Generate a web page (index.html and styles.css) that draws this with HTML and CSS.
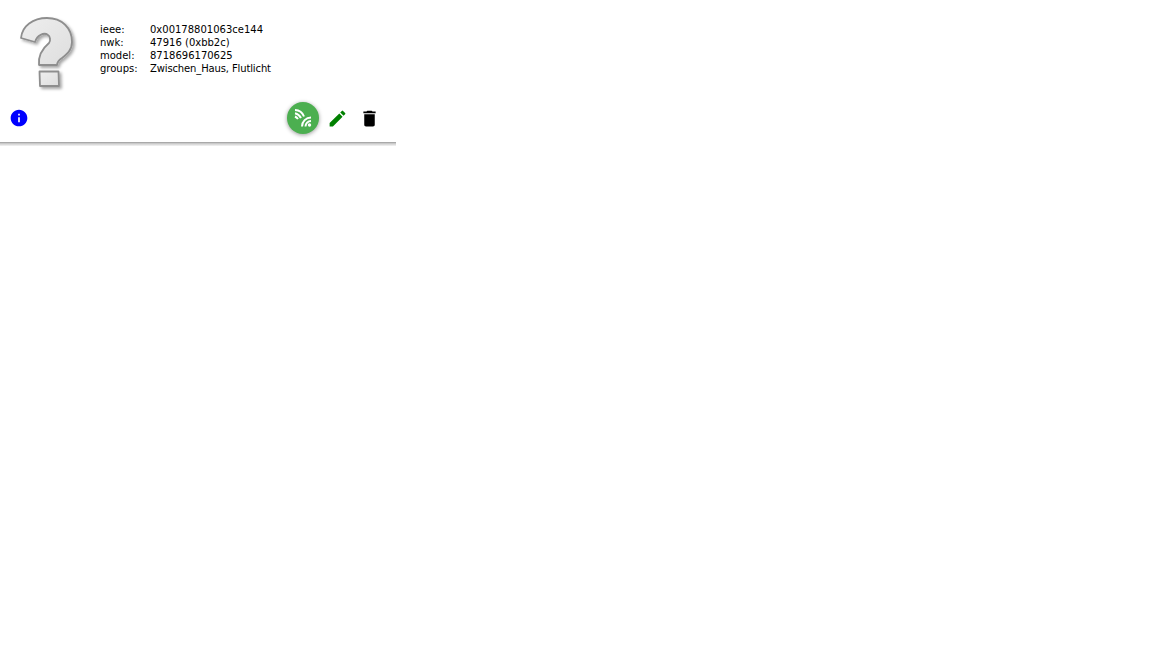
FILE: index.html
```html
<!DOCTYPE html>
<html>
<head>
  <title>Device</title>
  <link rel="stylesheet" href="styles.css">
</head>
<body>
  <div class="card">
    <div class="card-top">
      <div class="device-img">
        <svg width="100" height="100" viewBox="0 0 100 100">
          <defs>
            <linearGradient id="qfill" x1="0" y1="0" x2="1" y2="1">
              <stop offset="0" stop-color="#eeeeee"/>
              <stop offset="1" stop-color="#dedede"/>
            </linearGradient>
            <filter id="qshadow" x="-20%" y="-20%" width="150%" height="150%">
              <feGaussianBlur stdDeviation="0.4"/>
              <feDropShadow dx="2" dy="2" stdDeviation="1.5" flood-color="#000" flood-opacity="0.35"/>
            </filter>
          </defs>
          <g fill="url(#qfill)" stroke="#8e8e8e" stroke-width="1.800" stroke-linejoin="round" filter="url(#qshadow)">
            <path d="M21 38 C22 26 33 18 47 18 C62 18 72 28 72 42 C72 50 67 54 62 58 C59 60 57 62 57 65 L39 65 C38 55 43 48 49 43 C51 41 50 36 48 35 C44 32 37 35 35 42 Z"/>
            <path d="M39.500 71.500 L58.500 71.500 L59 86 L40 86 Z"/>
          </g>
        </svg>
      </div>
      <table class="info">
        <tr><td class="label">ieee:</td><td>0x00178801063ce144</td></tr>
        <tr><td class="label">nwk:</td><td>47916 (0xbb2c)</td></tr>
        <tr><td class="label">model:</td><td>8718696170625</td></tr>
        <tr><td class="label">groups:</td><td class="tight">Zwischen_Haus, Flutlicht</td></tr>
      </table>
    </div>
    <div class="card-actions">
      <svg class="icon" viewBox="0 0 24 24" width="20" height="20">
        <path fill="#00f" d="M12 2C6.48 2 2 6.48 2 12s4.48 10 10 10 10-4.48 10-10S17.52 2 12 2zm1 15h-2v-6h2v6zm0-8h-2V7h2v2z"/>
      </svg>
      <div class="actions-right">
        <button class="fab">
          <svg viewBox="0 0 20 20" width="20" height="20" fill="none" stroke="#fff" stroke-width="2">
            <path d="M2 8.500A8 8 0 0 1 5 11"/>
            <path d="M2 5.200A9 9 0 0 1 8 10"/>
            <path d="M2 2A10 10 0 0 1 11 8.500"/>
            <path d="M12.500 18.500A5.500 5.500 0 0 1 18 13"/>
            <path d="M9 18.500A9 9 0 0 1 18 9.500"/>
            <circle cx="16.500" cy="17" r="1.700" fill="#fff" stroke="none"/>
          </svg>
        </button>
        <button class="icon-btn">
          <svg viewBox="0 0 24 24" width="21" height="21">
            <path fill="#008000" d="M3 17.250V21h3.750L17.810 9.940l-3.750-3.750L3 17.250zM20.710 7.040a1 1 0 0 0 0-1.410l-2.340-2.340a1 1 0 0 0-1.410 0l-1.830 1.830 3.750 3.750 1.830-1.830z"/>
          </svg>
        </button>
        <button class="icon-btn">
          <svg viewBox="0 0 24 24" width="21" height="21">
            <path fill="#000" d="M6 19c0 1.100.9 2 2 2h8c1.100 0 2-.9 2-2V7H6v12zM19 4h-3.500l-1-1h-5l-1 1H5v2h14V4z"/>
          </svg>
        </button>
      </div>
    </div>
    <div class="card-shadow"></div>
  </div>
</body>
</html>
```

FILE: styles.css
```css
body {
  margin: 0;
  background-color: #fff;
  font-family: "DejaVu Sans", sans-serif;
  font-size: 10px;
  color: #000;
}

.card {
  width: 396px;
  display: flex;
  flex-direction: column;
}

.card-top {
  display: flex;
  height: 100px;
}

.device-img {
  width: 100px;
  height: 100px;
  flex-shrink: 0;
}

.device-img svg {
  display: block;
}

.info {
  border-collapse: collapse;
  margin-top: 23px;
  align-self: flex-start;
}

.info td {
  padding: 0;
  height: 13px;
  line-height: 13px;
  white-space: nowrap;
}

.info .label {
  width: 50px;
}

.info .tight {
  letter-spacing: -0.13px;
}

.card-actions {
  height: 42px;
  display: flex;
  justify-content: space-between;
  align-items: center;
  padding: 0 11px 6px 9px;
  box-sizing: border-box;
}

.actions-right {
  display: flex;
  align-items: center;
}

.card-shadow {
  height: 4px;
  background: linear-gradient(#999, #ccc 40%, #f4f4f4);
}

.icon {
  display: block;
}

button {
  border: none;
  background: none;
  padding: 0;
  cursor: pointer;
  display: flex;
  align-items: center;
  justify-content: center;
}

.icon-btn {
  width: 32px;
  height: 32px;
}

.fab {
  width: 32px;
  height: 32px;
  margin-right: 2px;
  border-radius: 50%;
  background-color: #4caf50;
  box-shadow: 0 1px 4px rgba(0, 0, 0, 0.4);
}
```
